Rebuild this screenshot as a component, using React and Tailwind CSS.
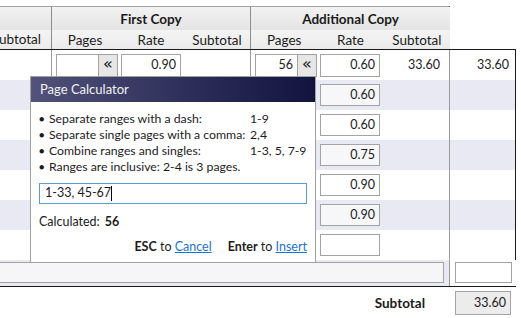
import React from "react";

const rates = ["0.60", "0.60", "0.60", "0.75", "0.90", "0.90", ""];

const Pager = ({ value }) => {
  return (
    <div className="flex h-[23px] w-[62px] border border-[#a3a3a3] bg-white">
      <div className="flex-1 flex items-center justify-end pr-[4px]">{value}</div>
      <div className="w-[19px] border-l border-[#a3a3a3] bg-[#e6e6e6] flex items-center justify-center text-[16px] leading-none pb-[2px] font-['DejaVu_Sans',sans-serif]">
        «
      </div>
    </div>
  );
};

const RateBox = ({ value, banded, tall }) => {
  return (
    <div
      className={`flex items-center justify-end pr-[4px] w-[60px] border border-[#a3a3a3] ${
        tall ? "h-[23px]" : "h-[22px]"
      } ${banded ? "bg-[#f7f7fa]" : "bg-white"}`}
    >
      {value}
    </div>
  );
};

const Row = ({ index, rate }) => {
  const banded = index % 2 === 1;
  const first = index === 0;
  return (
    <div
      className={`grid grid-cols-[52px_199px_199px_65px] h-[30px] ${
        banded ? "bg-[#e9e9f3]" : "bg-white"
      }`}
    >
      <div className="border-r border-[#9a9a9a]" />
      <div className="border-r border-[#9a9a9a] flex items-center gap-[3px] pl-[4px]">
        {first && (
          <>
            <Pager value="" />
            <RateBox value="0.90" tall />
          </>
        )}
      </div>
      <div className="border-r border-[#9a9a9a] flex items-center pl-[4px]">
        {first ? (
          <>
            <Pager value="56" />
            <div className="ml-[3px]">
              <RateBox value={rate} tall />
            </div>
            <div className="flex-1 text-right pr-[9px]">33.60</div>
          </>
        ) : (
          <div className="ml-[65px]">
            <RateBox value={rate} banded={banded} />
          </div>
        )}
      </div>
      <div className="flex items-center justify-end pr-[6px]">{first ? "33.60" : ""}</div>
    </div>
  );
};

const PageCalculator = () => {
  const tips = [
    ["Separate ranges with a dash:", "1-9"],
    ["Separate single pages with a comma:", "2,4"],
    ["Combine ranges and singles:", "1-3, 5, 7-9"],
    ["Ranges are inclusive: 2-4 is 3 pages.", ""],
  ];
  return (
    <div className="absolute left-[30px] top-[76px] w-[286px] h-[187px] border border-[#a0a0a0] bg-white flex flex-col text-[12.25px]">
      <div className="h-[25px] bg-gradient-to-r from-[#52527a] to-[#131340] text-[#f2f2f2] text-[13px] flex items-center pl-[9px]">
        Page Calculator
      </div>
      <div className="flex flex-col px-[8px] pt-[9px]">
        {tips.map(([label, example]) => (
          <div key={label} className="flex h-[16px] items-center whitespace-nowrap">
            <span className="w-[10px] text-[9px]">●</span>
            <span className="w-[201px]">{label}</span>
            <span>{example}</span>
          </div>
        ))}
        <div className="mt-[8px] h-[21px] border border-[#5b9bd5] flex items-center pl-[5px] text-[12.5px]">
          1-33, 45-67
          <span className="w-px h-[15px] bg-black" />
        </div>
        <div className="mt-[10px] h-[16px] flex items-center gap-[5px] text-[12.5px]">
          Calculated: <b className="font-bold">56</b>
        </div>
        <div className="mt-[9px] h-[16px] flex items-center justify-end gap-[16px] text-[12.5px]">
          <span>
            <b className="font-bold">ESC</b> to{" "}
            <span className="text-[#1a73d1] underline">Cancel</span>
          </span>
          <span>
            <b className="font-bold">Enter</b> to{" "}
            <span className="text-[#1a73d1] underline">Insert</span>
          </span>
        </div>
      </div>
    </div>
  );
};

const App = () => {
  return (
    <div className="relative w-[521px] h-[318px] overflow-hidden bg-white text-[12.5px] text-[#1b1b1b] font-['Lato',sans-serif]">
      <div className="pt-[6px]">
        <div className="w-[450px] border-t border-r border-t-[#a0a0a0] border-r-[#1a1a1a] grid grid-cols-[52px_199px_199px] text-[13.5px]">
          <div className="border-r border-[#8c8c8c] flex flex-col">
            <div className="h-[23px] bg-gradient-to-b from-[#f2f2f2] to-[#e4e4e4]" />
            <div className="h-[19px] bg-gradient-to-b from-[#f4f4f4] to-[#eaeaea] flex items-center justify-end pr-[10px] whitespace-nowrap overflow-hidden">
              Subtotal
            </div>
          </div>
          {["First Copy", "Additional Copy"].map((group) => (
            <div key={group} className="border-r border-[#8c8c8c] last:border-r-0 flex flex-col">
              <div className="h-[23px] bg-gradient-to-b from-[#f2f2f2] to-[#e4e4e4] flex items-center justify-center font-bold pt-[2px]">
                {group}
              </div>
              <div className="h-[19px] bg-gradient-to-b from-[#f4f4f4] to-[#eaeaea] grid grid-cols-3 items-center text-center">
                <span>Pages</span>
                <span>Rate</span>
                <span>Subtotal</span>
              </div>
            </div>
          ))}
        </div>
        <div className="w-[516px] border-t border-r border-b border-[#1a1a1a]">
          {rates.map((rate, i) => (
            <Row key={i} index={i} rate={rate} />
          ))}
          <div className="grid grid-cols-[449px_1px_66px] h-[26px] bg-[#e9e9f3]">
            <div className="flex items-start pt-[2px] pr-[5px]">
              <div className="w-full h-[21px] border border-[#a3a3a3] border-l-0 bg-[#f6f6f8]" />
            </div>
            <div className="bg-[#9a9a9a]" />
            <div className="flex items-start pt-[2px] pl-[5px] pr-[4px] bg-white">
              <div className="w-full h-[21px] border border-[#a3a3a3] bg-white" />
            </div>
          </div>
        </div>
        <div className="flex items-center justify-end h-[24px] mt-[4px] pr-[10px] gap-[30px]">
          <span className="font-bold text-[13.5px]">Subtotal</span>
          <div className="w-[56px] h-[24px] border border-[#a3a3a3] bg-[#ececec] flex items-center justify-end pr-[4px]">
            33.60
          </div>
        </div>
      </div>
      <PageCalculator />
    </div>
  );
};

export default App;
